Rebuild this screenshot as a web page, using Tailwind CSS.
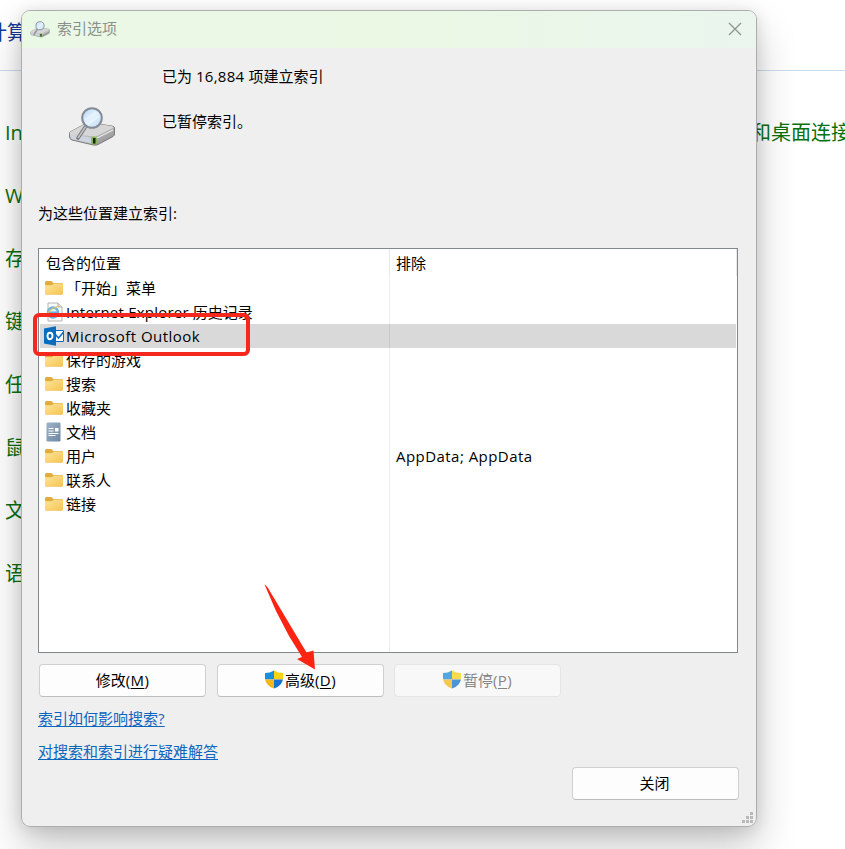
<!DOCTYPE html>
<html lang="zh-CN">
<head>
<meta charset="utf-8">
<title>索引选项</title>
<script src="https://cdn.jsdelivr.net/npm/@tailwindcss/browser@4"></script>
</head>
<body class="relative h-[849px] w-[845px] overflow-hidden bg-white font-['Open_Sans','Noto_Sans_CJK_SC',sans-serif] text-[15px] text-black">
<svg class="absolute h-0 w-0">
  <defs>
    <linearGradient id="fold" x1="0" y1="0" x2="1" y2="1"><stop stop-color="#ffe59b"/><stop offset="1" stop-color="#f5c44f"/></linearGradient>
    <linearGradient id="metal" x1="0" y1="0" x2="1" y2="1"><stop stop-color="#f2f2f2"/><stop offset="1" stop-color="#858585"/></linearGradient>
    <linearGradient id="lens" x1="0" y1="0" x2="1" y2="1"><stop stop-color="#b5d5f3"/><stop offset=".5" stop-color="#e3f2ff"/><stop offset="1" stop-color="#b9d9f5"/></linearGradient>
    <linearGradient id="docg" x1="0" y1="0" x2="1" y2="1"><stop stop-color="#9fb3c8"/><stop offset="1" stop-color="#6c87a3"/></linearGradient>
    <clipPath id="sc"><path d="M9 .5Q5 3 0 3V8Q0 15.500 9 18.500Q18 15.500 18 8V3Q13 3 9 .5Z"/></clipPath>
    <symbol id="folder" viewBox="0 0 20 20">
      <path d="M1 4.200Q1 3 2.200 3H7.500L9.300 5H17.800Q19 5 19 6.200V15Q19 16.500 17.800 16.500H2.200Q1 16.500 1 15Z" fill="#e3ac3c"/>
      <path d="M1 7.300H8L10 5.600H17.800Q19 5.600 19 6.800V15.300Q19 16.500 17.800 16.500H2.200Q1 16.500 1 15.300Z" fill="url(#fold)"/>
    </symbol>
    <symbol id="drive" viewBox="0 0 48 40">
      <path d="M2 25 17 17Q19 16 22 16L44 19Q46.500 19.500 46.500 21V27Q46.500 28.500 45 29.500L30 37.500Q28 38.500 25.500 38L4 33Q1.500 32 1.500 30V26.500Z" fill="url(#metal)" stroke="#7c7c7c"/>
      <path d="M2 25 17 17Q19 16 22 16L44 19Q46 20 45 21L29 29Q27 30 25 29.500L3 26.500Q1 26 2 25Z" fill="#d6d6d6"/>
      <path d="M4 27.500 25 31V37L4 32Z" fill="#cfd3df"/>
      <path d="M29 31 45 23" stroke="#f4f4f4"/>
      <rect x="23" y="29.500" width="6" height="8" rx="2.500" fill="#83b85a"/><rect x="25" y="31" width="2.500" height="5.500" fill="#172512"/>
      <path d="M18 19 10 31" stroke="#777" stroke-width="3.600" stroke-linecap="round"/><path d="M18 19 10 31" stroke="#c2c2c8" stroke-width="1.600"/>
      <circle cx="24" cy="11" r="9.800" fill="url(#lens)" stroke="#858b96" stroke-width="2"/>
      <path d="M17 13 28 5M20 17 31 9" stroke="#f4faff" stroke-width="1.500" opacity=".7"/>
    </symbol>
    <symbol id="shield" viewBox="0 0 18 19">
      <g clip-path="url(#sc)"><path d="M0 0H9V9.500H0Z" fill="#1a8ed8"/><path d="M9 0H18V9.500H9Z" fill="#fcd116"/><path d="M0 9.500H9V19H0Z" fill="#f5b81c"/><path d="M9 9.500H18V19H9Z" fill="#1673cf"/></g>
    </symbol>
  </defs>
</svg>

<main class="absolute inset-0 text-[20px] leading-[30px] text-[#08700f]">
  <div class="h-[71px] border-b border-[#cbdcec] pt-[18px] text-[#133a94]"><div class="-ml-[13px]">计算</div></div>
  <div class="flex flex-col gap-[33px] pl-[5px] pt-[47px]">
    <div class="flex h-[30px] justify-between whitespace-nowrap"><span>In</span><span class="-mr-[6px]">和桌面连接</span></div>
    <div class="h-[30px]">W</div><div class="h-[30px]">存</div><div class="h-[30px]">键</div><div class="h-[30px]">任</div><div class="h-[30px]">鼠</div><div class="h-[30px]">文</div><div class="h-[30px]">语</div>
  </div>
</main>

<div class="pointer-events-none absolute left-[21px] top-[10px] h-[817px] w-[736px] rounded-[9px] shadow-[0_20px_40px_rgba(0,0,0,0.22),0_2px_16px_rgba(0,0,0,0.12)]"></div>
<section class="absolute left-[21px] top-[10px] flex h-[817px] w-[736px] flex-col overflow-hidden rounded-[9px] border border-[#adadad] bg-[#efefef] leading-[24px]">
  <header class="flex h-[37px] shrink-0 items-center bg-linear-to-r from-[#eaf8e6] via-[#eaf8e4] to-[#eaf6ee] pb-[3px] pl-[8px] pr-[14px] text-[#8b918a]">
    <svg class="mr-[7px] mt-[3px] h-[17px] w-[20px]"><use href="#drive"/></svg>
    <span class="grow">索引选项</span>
    <svg class="mt-[2px] h-[14px] w-[14px]" viewBox="0 0 14 14" fill="none" stroke="#8d938f" stroke-width="1.300"><path d="M1 1 13 13M13 1 1 13"/></svg>
  </header>
  <div class="flex h-[142px] shrink-0 pl-[46px] pt-[16px]">
    <svg class="mt-[43px] h-[40px] w-[48px]"><use href="#drive"/></svg>
    <div class="ml-[46px] flex flex-col gap-[21px]"><p>已为 <span class="tracking-[0.3px]">16,884</span> 项建立索引</p><p>已暂停索引。</p></div>
  </div>
  <p class="h-[58px] shrink-0 pl-[16px] pt-[11px]">为这些位置建立索引:</p>

  <div class="ml-[16px] flex h-[405px] w-[700px] shrink-0 flex-col border border-[#828790] bg-white">
    <div class="flex h-[27px] shrink-0"><div class="w-[351px] border-r border-[#e9e9e9] pl-[7px] pt-[2px]">包含的位置</div><div class="grow border-r border-[#e9e9e9] pl-[6px] pt-[2px]">排除</div></div>
    <div class="flex grow flex-col">
      <div class="flex h-[24px]"><div class="flex w-[351px] items-center border-r border-[#efefef] pl-[5px]"><svg class="mr-[2px] h-[20px] w-[20px]"><use href="#folder"/></svg>「开始」菜单</div></div>
      <div class="flex h-[24px]"><div class="flex w-[351px] items-center border-r border-[#efefef] pl-[5px]">
        <svg class="mr-[2px] h-[20px] w-[20px]" viewBox="0 0 20 20"><path d="M4 1H14L18 5V19H4Z" fill="#fafafa" stroke="#b5b5b5"/><path d="M14 1V5H18" fill="#ddd" stroke="#b5b5b5"/><circle cx="9" cy="10.500" r="5" fill="#dff1fb" stroke="#6bb4e2" stroke-width="2.400"/><path d="M5 10.500H13" stroke="#6bb4e2" stroke-width="2"/><path d="M2 15Q3 8 15 4" fill="none" stroke="#e6c34b" stroke-width="1.300"/></svg><span class="whitespace-nowrap"><span class="tracking-[0.22px]">Internet Explorer</span> 历史记录</span></div></div>
      <div class="mx-[1px] flex h-[24px] bg-[#d9d9d9]"><div class="flex w-[350px] items-center border-r border-[#c9c9c9] pl-[4px]">
        <svg class="mr-[2px] h-[20px] w-[20px]" viewBox="0 0 20 20"><path d="M10 4.500H19.500V15.500H10Z" fill="#fff" stroke="#0a6fc2"/><path d="M11 8 14.500 12 20 5.500" fill="none" stroke="#0a6fc2" stroke-width="1.500"/><path d="M0 2.500 12 .3V19.700L0 17.500Z" fill="#0a6cbd"/><ellipse cx="6" cy="10" rx="2.500" ry="3.200" fill="none" stroke="#fff" stroke-width="1.900"/></svg><span class="tracking-[0.48px]">Microsoft Outlook</span></div></div>
      <div class="flex h-[24px]"><div class="flex w-[351px] items-center border-r border-[#efefef] pl-[5px]"><svg class="mr-[2px] h-[20px] w-[20px]"><use href="#folder"/></svg>保存的游戏</div></div>
      <div class="flex h-[24px]"><div class="flex w-[351px] items-center border-r border-[#efefef] pl-[5px]"><svg class="mr-[2px] h-[20px] w-[20px]"><use href="#folder"/></svg>搜索</div></div>
      <div class="flex h-[24px]"><div class="flex w-[351px] items-center border-r border-[#efefef] pl-[5px]"><svg class="mr-[2px] h-[20px] w-[20px]"><use href="#folder"/></svg>收藏夹</div></div>
      <div class="flex h-[24px]"><div class="flex w-[351px] items-center border-r border-[#efefef] pl-[5px]"><svg class="mr-[2px] h-[20px] w-[20px]" viewBox="0 0 20 20"><rect x="2.500" y=".5" width="14" height="19" rx="1.200" fill="url(#docg)"/><path d="M4.500 6.500H9.500M4.500 9H9.500M4.500 11.500H14.500M4.500 13.500H11.500" stroke="#fff" stroke-width="1.200"/><path d="M11 6H14.500V9.500H11Z" fill="#fff"/></svg>文档</div></div>
      <div class="flex h-[24px]"><div class="flex w-[351px] items-center border-r border-[#efefef] pl-[5px]"><svg class="mr-[2px] h-[20px] w-[20px]"><use href="#folder"/></svg>用户</div><div class="pl-[6px] tracking-[0.45px]">AppData; AppData</div></div>
      <div class="flex h-[24px]"><div class="flex w-[351px] items-center border-r border-[#efefef] pl-[5px]"><svg class="mr-[2px] h-[20px] w-[20px]"><use href="#folder"/></svg>联系人</div></div>
      <div class="flex h-[24px]"><div class="flex w-[351px] items-center border-r border-[#efefef] pl-[5px]"><svg class="mr-[2px] h-[20px] w-[20px]"><use href="#folder"/></svg>链接</div></div>
      <div class="w-[351px] grow border-r border-[#efefef]"></div>
    </div>
  </div>

  <div class="mt-[11px] flex shrink-0 gap-[11px] pl-[17px]">
    <button class="h-[33px] w-[167px] rounded-[4px] border border-[#cfcfcf] border-b-[#bdbdbd] bg-[#fdfdfd] pb-[2px]">修改<span class="tracking-[0.4px]">(<u class="underline-offset-2">M</u>)</span></button>
    <button class="flex h-[33px] w-[167px] items-center justify-center rounded-[4px] border border-[#cfcfcf] border-b-[#bdbdbd] bg-[#fdfdfd] pb-[2px]"><svg class="mr-[2px] h-[19px] w-[18px]"><use href="#shield"/></svg><span>高级<span class="tracking-[0.4px]">(<u class="underline-offset-2">D</u>)</span></span></button>
    <button class="-ml-[1px] flex h-[33px] w-[167px] items-center justify-center rounded-[4px] border border-[#e5e5e5] bg-[#f8f8f8] pb-[2px] text-[#858585]"><svg class="mr-[2px] h-[19px] w-[18px] opacity-75"><use href="#shield"/></svg><span>暂停<span class="tracking-[0.4px]">(<u class="underline-offset-2">P</u>)</span></span></button>
  </div>
  <div class="mt-[9px] flex shrink-0 flex-col items-start gap-[9px] pl-[16px] text-[#0d66bd] underline underline-offset-2"><a>索引如何影响搜索?</a><a>对搜索和索引进行疑难解答</a></div>
  <div class="mt-[4px] flex shrink-0 justify-end pr-[17px]"><button class="h-[33px] w-[167px] rounded-[4px] border border-[#cfcfcf] border-b-[#bdbdbd] bg-[#fdfdfd] pb-[2px] pr-[2px]">关闭</button></div>
  <svg class="absolute bottom-[2px] right-[3px] h-[12px] w-[12px]" fill="#b9b9b9"><path d="M9 0h3v3H9zM5 4h3v3H5zM9 4h3v3H9zM1 8h3v3H1zM5 8h3v3H5zM9 8h3v3H9z"/></svg>
</section>

<div class="absolute left-[33px] top-[313px] h-[43px] w-[217px] rounded-[6px] border-4 border-[#f5281e]"></div>
<svg class="absolute left-[260px] top-[580px] h-[94px] w-[60px]" viewBox="260 580 60 94"><path d="M264.500 584.500Q266 585 268 588L306.500 652.500 313.500 650.500 315 669.500 297 659 302 657 289 636 276 611Z" fill="#fd2412"/></svg>
</body>
</html>
